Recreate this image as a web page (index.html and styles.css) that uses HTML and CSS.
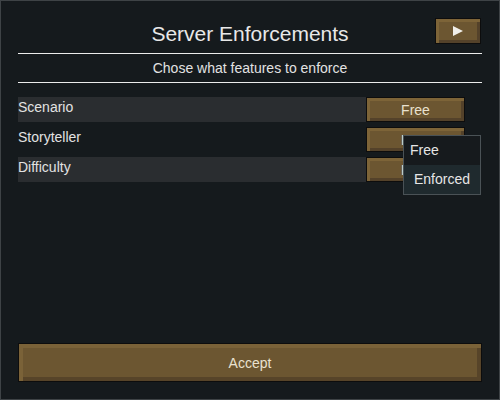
FILE: index.html
```html
<!DOCTYPE html>
<html lang="en">
<head>
<meta charset="utf-8">
<title>Server Enforcements</title>
<link rel="stylesheet" href="styles.css">
</head>
<body>
<div class="window">
  <header class="header">
    <span></span>
    <h1 class="title">Server Enforcements</h1>
    <button class="btn play-btn" aria-label="Next">
      <svg width="10" height="10" viewBox="0 0 10 10"><polygon points="0,0 10,5 0,10" fill="#f0eee8"/></svg>
    </button>
  </header>
  <div class="subtitle">Chose what features to enforce</div>

  <div class="rows">
    <div class="row striped">
      <div class="label">Scenario</div>
      <button class="btn small-btn">Free</button>
    </div>
    <div class="row">
      <div class="label">Storyteller</div>
      <div class="cell">
        <button class="btn small-btn">Free</button>
        <ul class="menu">
          <li class="menu-item">Free</li>
          <li class="menu-item active">Enforced</li>
        </ul>
      </div>
    </div>
    <div class="row striped">
      <div class="label">Difficulty</div>
      <button class="btn small-btn">Free</button>
    </div>
  </div>

  <button class="btn accept-btn">Accept</button>
</div>
</body>
</html>
```

FILE: styles.css
```css
* {
  box-sizing: border-box;
}

html, body {
  margin: 0;
  padding: 0;
  background: #151a1d;
}

body {
  font-family: "Liberation Sans", Arial, sans-serif;
  color: #e2e2e2;
}

.window {
  width: 500px;
  height: 400px;
  border: 1px solid #3e4346;
  background: #151a1d;
  padding: 17px;
  display: flex;
  flex-direction: column;
}

/* Title bar */
.header {
  display: grid;
  grid-template-columns: 1fr auto 1fr;
  align-items: start;
  height: 36px;
  border-bottom: 1px solid #ececec;
}

.title {
  margin: 0;
  font-size: 21px;
  font-weight: normal;
  line-height: 31px;
  color: #e8e8e8;
  white-space: nowrap;
}

.subtitle {
  height: 29px;
  line-height: 28px;
  text-align: center;
  font-size: 14px;
  color: #e2e2e2;
  border-bottom: 1px solid #ececec;
}

/* Bevelled wooden buttons */
.btn {
  display: flex;
  align-items: center;
  justify-content: center;
  padding: 0;
  margin: 0;
  font-family: inherit;
  font-size: 14px;
  color: #e9e1cf;
  background: #6c5631;
  border: 1px solid #0d0d0d;
  box-shadow: inset 3px 3px 0 #7d6438, inset -3px -3px 0 #54422a;
  cursor: pointer;
}

.play-btn {
  justify-self: end;
  margin-right: 1px;
  width: 46px;
  height: 26px;
}

.rows {
  margin-top: 14px;
  display: flex;
  flex-direction: column;
  gap: 5px;
}

.row {
  display: grid;
  grid-template-columns: 348px 99px;
  height: 25px;
}

.row.striped .label {
  background: #2a2d30;
}

.label {
  font-size: 14px;
  line-height: 20px;
  color: #e2e2e2;
}

.small-btn {
  width: 99px;
  height: 25px;
}

.cell {
  position: relative;
}

/* Open dropdown of the Storyteller option */
.menu {
  position: absolute;
  left: 37px;
  top: 8px;
  width: 78px;
  margin: 0;
  padding: 0;
  list-style: none;
  border: 1px solid #4a5256;
  background: #161a1d;
  z-index: 2;
}

.menu-item {
  height: 29px;
  line-height: 28px;
  font-size: 14px;
  padding-left: 6px;
  color: #e6e6e6;
}

.menu-item.active {
  background: #1f2a2e;
  padding-left: 10px;
}

.accept-btn {
  margin-top: auto;
  width: 100%;
  height: 39px;
  font-size: 14px;
  box-shadow: inset 4px 4px 0 #7a6238, inset -4px -4px 0 #574429;
}
```
